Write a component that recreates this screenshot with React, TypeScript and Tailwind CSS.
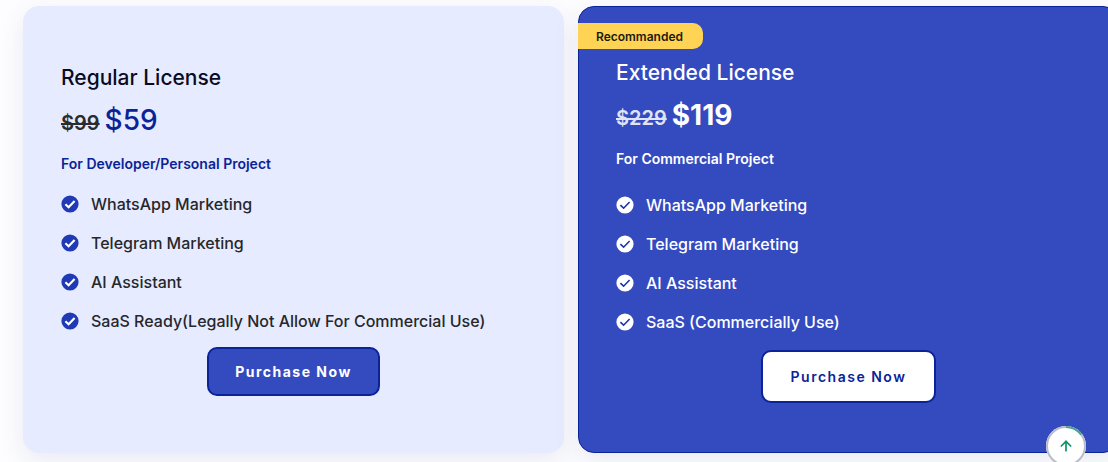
import { ArrowUp } from "lucide-react";
import { clsx } from "clsx";

type Plan = {
    name: string;
    oldPrice: string;
    price: string;
    audience: string;
    features: string[];
    badge?: string;
};

const PLANS: Plan[] = [
    {
        name: "Regular License",
        oldPrice: "$99",
        price: "$59",
        audience: "For Developer/Personal Project",
        features: [
            "WhatsApp Marketing",
            "Telegram Marketing",
            "AI Assistant",
            "SaaS Ready(Legally Not Allow For Commercial Use)",
        ],
    },
    {
        name: "Extended License",
        oldPrice: "$229",
        price: "$119",
        audience: "For Commercial Project",
        features: [
            "WhatsApp Marketing",
            "Telegram Marketing",
            "AI Assistant",
            "SaaS (Commercially Use)",
        ],
        badge: "Recommanded",
    },
];

function CheckIcon({ featured }: { featured: boolean }) {
    return (
        <svg viewBox="0 0 18 18" className="size-[18px] shrink-0" aria-hidden="true">
            <circle cx="9" cy="9" r="8.6" className={featured ? "fill-white" : "fill-[#2039b4]"} />
            <path
                d="M4.4 9.2 7.6 12.2 13.6 6"
                fill="none"
                strokeWidth={featured ? 1.6 : 2.2}
                className={featured ? "stroke-[#1c34a8]" : "stroke-white"}
            />
        </svg>
    );
}

function PlanCard({ plan }: { plan: Plan }) {
    const featured = Boolean(plan.badge);

    return (
        <section
            className={clsx(
                "relative rounded-2xl border px-[37px] shadow-[0_8px_24px_rgba(60,70,140,0.10)]",
                featured
                    ? "border-[#0a2399] bg-[#344abf] pt-[50px] pb-12 text-white"
                    : "border-[#e6ebff] bg-[#e6ebff] pt-[55px] pb-14 text-[#26272b]"
            )}
        >
            {plan.badge && (
                <span className="absolute top-4 -left-px rounded-r-[10px] bg-[#ffd454] pt-0.5 pr-5 pl-[18px] text-[12px] leading-6 font-semibold text-[#1c1a10]">
                    {plan.badge}
                </span>
            )}

            <h2 className={clsx("text-[21px] leading-8 font-medium", !featured && "text-[#0a0b1e]")}>
                {plan.name}
            </h2>

            <p className="mt-2 flex items-baseline gap-[5px] leading-9">
                <del className={clsx("text-[20px] font-semibold", featured ? "text-[#dfe3f4]" : "text-[#2b2c2e]")}>
                    {plan.oldPrice}
                </del>
                <span className={clsx("text-[28px]", featured ? "font-bold" : "font-medium text-[#0b2396]")}>
                    {plan.price}
                </span>
            </p>

            <p className={clsx("mt-[11px] text-[14px] leading-6 font-semibold", !featured && "text-[#0b2396]")}>
                {plan.audience}
            </p>

            <ul className={clsx("space-y-[15px]", featured ? "mt-[22px]" : "mt-4")}>
                {plan.features.map((feature) => (
                    <li key={feature} className="flex items-center gap-3 text-[16px] leading-6 font-medium">
                        <CheckIcon featured={featured} />
                        {feature}
                    </li>
                ))}
            </ul>

            <div className={clsx("flex justify-center", featured ? "mt-4" : "mt-[14px]")}>
                <button
                    type="button"
                    className={clsx(
                        "rounded-[10px] border-2 border-[#0a2399] text-[14px] tracking-[1.5px]",
                        featured
                            ? "bg-white px-7 py-[14px] font-semibold text-[#0b2396]"
                            : "bg-[#344abf] px-[26px] py-3 font-bold text-white"
                    )}
                >
                    Purchase Now
                </button>
            </div>
        </section>
    );
}

export default function App() {
    return (
        <main className="min-h-screen overflow-hidden bg-[#fdfdff] pt-1.5 font-['Inter',sans-serif]">
            <div className="-mr-[11px] grid grid-cols-2 gap-3.5 pl-[23px]">
                {PLANS.map((plan) => (
                    <PlanCard key={plan.name} plan={plan} />
                ))}
            </div>

            {/* Back to top */}
            <button
                type="button"
                aria-label="Back to top"
                className="fixed right-[22px] -bottom-1 flex size-10 items-center justify-center rounded-full bg-white"
            >
                <svg viewBox="0 0 40 40" className="absolute inset-0 size-10" aria-hidden="true">
                    <circle cx="20" cy="20" r="19" fill="none" stroke="#b9bcc5" strokeWidth="2" />
                    <path d="M20 1a19 19 0 0 1 15.2 7.6" fill="none" stroke="#4aa58f" strokeWidth="2" />
                </svg>
                <ArrowUp className="size-4 text-[#109468]" strokeWidth={2.6} />
            </button>
        </main>
    );
}
